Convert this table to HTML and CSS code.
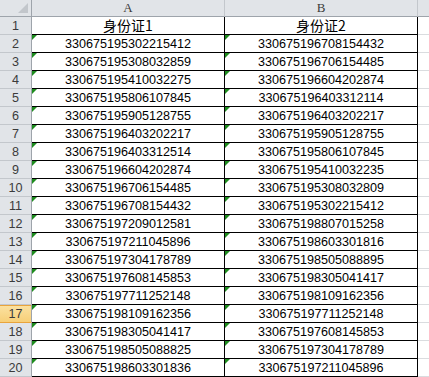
FILE: index.html
```html
<!DOCTYPE html>
<html>
<head>
<meta charset="utf-8">
<link rel="stylesheet" href="styles.css">
</head>
<body>
<div class="sheet">
  <div class="corner"><svg class="corner-tri" width="12" height="12" viewBox="0 0 12 12"><polygon points="11,1 11,11 1,11" /></svg></div>
  <div class="colhead">A</div>
  <div class="colhead">B</div>
  <div class="colhead colhead-c"></div>

  <div class="rowhead">1</div><div class="cell title">身份证1</div><div class="cell title">身份证2</div><div class="grid"></div>
  <div class="rowhead">2</div><div class="cell num">330675195302215412</div><div class="cell num">330675196708154432</div><div class="grid"></div>
  <div class="rowhead">3</div><div class="cell num">330675195308032859</div><div class="cell num">330675196706154485</div><div class="grid"></div>
  <div class="rowhead">4</div><div class="cell num">330675195410032275</div><div class="cell num">330675196604202874</div><div class="grid"></div>
  <div class="rowhead">5</div><div class="cell num">330675195806107845</div><div class="cell num">330675196403312114</div><div class="grid"></div>
  <div class="rowhead">6</div><div class="cell num">330675195905128755</div><div class="cell num">330675196403202217</div><div class="grid"></div>
  <div class="rowhead">7</div><div class="cell num">330675196403202217</div><div class="cell num">330675195905128755</div><div class="grid"></div>
  <div class="rowhead">8</div><div class="cell num">330675196403312514</div><div class="cell num">330675195806107845</div><div class="grid"></div>
  <div class="rowhead">9</div><div class="cell num">330675196604202874</div><div class="cell num">330675195410032235</div><div class="grid"></div>
  <div class="rowhead">10</div><div class="cell num">330675196706154485</div><div class="cell num">330675195308032809</div><div class="grid"></div>
  <div class="rowhead">11</div><div class="cell num">330675196708154432</div><div class="cell num">330675195302215412</div><div class="grid"></div>
  <div class="rowhead">12</div><div class="cell num">330675197209012581</div><div class="cell num">330675198807015258</div><div class="grid"></div>
  <div class="rowhead">13</div><div class="cell num">330675197211045896</div><div class="cell num">330675198603301816</div><div class="grid"></div>
  <div class="rowhead">14</div><div class="cell num">330675197304178789</div><div class="cell num">330675198505088895</div><div class="grid"></div>
  <div class="rowhead">15</div><div class="cell num">330675197608145853</div><div class="cell num">330675198305041417</div><div class="grid"></div>
  <div class="rowhead">16</div><div class="cell num">330675197711252148</div><div class="cell num">330675198109162356</div><div class="grid"></div>
  <div class="rowhead active">17</div><div class="cell num">330675198109162356</div><div class="cell num">330675197711252148</div><div class="grid"></div>
  <div class="rowhead">18</div><div class="cell num">330675198305041417</div><div class="cell num">330675197608145853</div><div class="grid"></div>
  <div class="rowhead">19</div><div class="cell num">330675198505088825</div><div class="cell num">330675197304178789</div><div class="grid"></div>
  <div class="rowhead">20</div><div class="cell num">330675198603301836</div><div class="cell num">330675197211045896</div><div class="grid"></div>
</div>
</body>
</html>
```
FILE: styles.css
```css
html, body {
  margin: 0;
  padding: 0;
  background: #ffffff;
}

.sheet {
  display: grid;
  grid-template-columns: 32px 193px 193px 11px;
  grid-template-rows: 17px repeat(20, 18px);
  width: 429px;
  height: 377px;
  overflow: hidden;
  font-family: "Liberation Sans", Arial, sans-serif;
}

.sheet > div {
  box-sizing: border-box;
}

.corner {
  position: relative;
  background: #e1e4e8;
  border-right: 1px solid #9ea4ab;
  border-bottom: 1px solid #9ea4ab;
}

.corner-tri {
  position: absolute;
  right: 2px;
  bottom: 2px;
}

.corner-tri polygon {
  fill: #c2c6cb;
}

.colhead {
  background: #e1e4e8;
  border-right: 1px solid #c3c7cc;
  border-bottom: 1px solid #9ea4ab;
  font-family: "Liberation Serif", "Times New Roman", serif;
  font-size: 13px;
  color: #3b3b3b;
  text-align: center;
  line-height: 16px;
}

.colhead-c {
  border-right: none;
}

.rowhead {
  background: #e1e4e8;
  border-right: 1px solid #9ea4ab;
  border-bottom: 1px solid #c3c7cc;
  font-size: 12.6px;
  color: #3b3b3b;
  text-align: center;
  line-height: 18px;
}

.rowhead.active {
  background: linear-gradient(#fbe2a2, #f7cf78);
  border-bottom: 1px solid #e9a43c;
  box-shadow: inset 0 1px 0 #e9a43c;
}

.cell {
  position: relative;
  border-right: 1px solid #000000;
  border-bottom: 1px solid #000000;
  color: #000000;
  text-align: center;
  line-height: 18px;
}

.cell.title {
  font-family: "Noto Sans CJK SC", sans-serif;
  font-size: 14px;
  line-height: 17px;
}

.cell.num {
  font-size: 12.6px;
}

.cell.num::before {
  content: "";
  position: absolute;
  left: 0;
  top: 0;
  border-top: 5px solid #1e8c1e;
  border-right: 5px solid transparent;
}

.grid {
  border-bottom: 1px solid #dadcdf;
}
```
